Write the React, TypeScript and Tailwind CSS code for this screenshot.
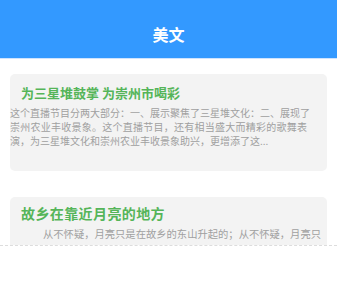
import React from "react";

const font = { fontFamily: '"Noto Sans CJK SC", "Noto Sans", sans-serif' };

export default function App() {
  return (
    <div className="w-[337px] h-[285px] bg-white overflow-hidden" style={font}>
      <div className="h-[59px] bg-[#3399ff] border-b border-[#cfe4ff] flex items-center justify-center pt-[9px]">
        <span className="text-white text-[16px] font-bold leading-none">美文</span>
      </div>
      <div className="h-[187px] overflow-hidden border-b border-dashed border-[#dddddd] pt-[15px]">
        <div className="mx-[10px] h-[97px] rounded-[5px] bg-[#f3f3f3] pt-[9px]">
          <div className="pl-[11px] text-[13px] leading-[20px] font-bold text-[#55b559] whitespace-nowrap">
            为三星堆鼓掌 为崇州市喝彩
          </div>
          <div className="mt-[3px] text-[10px] leading-[14px] text-[#a0a0a0] whitespace-nowrap">
            <div>这个直播节目分两大部分：一、展示聚焦了三星堆文化：二、展现了</div>
            <div className="tracking-[0.25px]">崇州农业丰收景象。这个直播节目，还有相当盛大而精彩的歌舞表</div>
            <div>演，为三星堆文化和崇州农业丰收景象助兴，更增添了这...</div>
          </div>
        </div>
        <div className="mx-[10px] mt-[26px] h-[80px] rounded-[5px] bg-[#f3f3f3] pt-[6px]">
          <div className="pl-[11px] text-[14px] tracking-[0.4px] leading-[20px] font-bold text-[#55b559] whitespace-nowrap">
            故乡在靠近月亮的地方
          </div>
          <div className="mt-[4px] pl-[33px] text-[10.3px] leading-[14px] text-[#a0a0a0] whitespace-nowrap">
            从不怀疑，月亮只是在故乡的东山升起的；从不怀疑，月亮只
          </div>
        </div>
      </div>
    </div>
  );
}
